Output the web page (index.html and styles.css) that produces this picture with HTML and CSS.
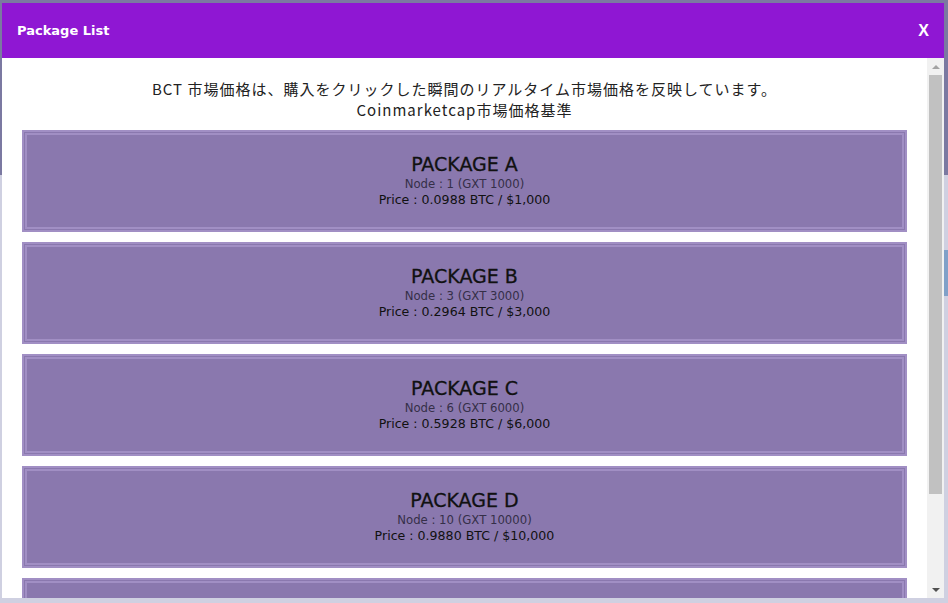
FILE: index.html
```html
<!DOCTYPE html>
<html lang="ja">
<head>
    <meta charset="UTF-8">
    <meta name="viewport" content="width=device-width, initial-scale=1.0">
    <title>Package List</title>
    <link rel="stylesheet" href="styles.css">
</head>
<body>
    <!-- Page behind the dimmed overlay -->
    <div class="page">
        <div class="page-top"></div>
        <div class="page-rest"></div>
    </div>
    <div class="side-tab"></div>

    <!-- Package popup -->
    <div class="popup" id="packagePopup">
        <div class="popup-header">
            <h2>Package List</h2>
            <button type="button" class="close-btn">X</button>
        </div>
        <div class="popup-main">
            <div class="popup-body">
                <p class="notice">BCT 市場価格は、購入をクリックした瞬間のリアルタイム市場価格を反映しています。<br>Coinmarketcap市場価格基準</p>

                <div class="package">
                    <h3>PACKAGE A</h3>
                    <div class="node">Node : 1 (GXT 1000)</div>
                    <div class="price">Price : 0.0988 BTC / $1,000</div>
                </div>
                <div class="package">
                    <h3>PACKAGE B</h3>
                    <div class="node">Node : 3 (GXT 3000)</div>
                    <div class="price">Price : 0.2964 BTC / $3,000</div>
                </div>
                <div class="package">
                    <h3>PACKAGE C</h3>
                    <div class="node">Node : 6 (GXT 6000)</div>
                    <div class="price">Price : 0.5928 BTC / $6,000</div>
                </div>
                <div class="package">
                    <h3>PACKAGE D</h3>
                    <div class="node">Node : 10 (GXT 10000)</div>
                    <div class="price">Price : 0.9880 BTC / $10,000</div>
                </div>
                <div class="package">
                    <h3>PACKAGE E</h3>
                    <div class="node">Node : 20 (GXT 20000)</div>
                    <div class="price">Price : 1.9760 BTC / $20,000</div>
                </div>
            </div>

            <!-- Scrollbar -->
            <div class="scrollbar">
                <div class="scroll-btn"><span class="arrow-up"></span></div>
                <div class="scroll-track">
                    <div class="scroll-thumb"></div>
                </div>
                <div class="scroll-btn"><span class="arrow-down"></span></div>
            </div>
        </div>
    </div>
</body>
</html>
```

FILE: styles.css
```css
/* Page and overlay */
body {
    margin: 0;
    font-family: "DejaVu Sans", "Noto Sans CJK JP", sans-serif;
    overflow: hidden;
}

.page {
    height: 603px;
    display: flex;
    flex-direction: column;
}

.page-top {
    height: 175px;
    background-color: #7b79a1;
}

.page-rest {
    flex: 1;
    background-color: #cfd0e1;
}

.side-tab {
    position: fixed;
    right: 0;
    top: 250px;
    width: 4px;
    height: 46px;
    background-color: #80a0c8;
}

/* Popup */
.popup {
    position: fixed;
    left: 2px;
    top: 3px;
    width: 942px;
    height: 595px;
    background-color: #fff;
    display: flex;
    flex-direction: column;
}

.popup-header {
    height: 55px;
    flex-shrink: 0;
    background-color: #8f17d3;
    display: flex;
    align-items: center;
    justify-content: space-between;
    padding: 0 15px 0 15px;
}

.popup-header h2 {
    margin: 0;
    color: #fff;
    font-size: 13px;
    font-weight: bold;
}

.close-btn {
    background: none;
    border: none;
    color: #fff;
    font-family: "Liberation Sans", sans-serif;
    font-size: 16px;
    font-weight: bold;
    padding: 0;
    cursor: pointer;
}

.popup-main {
    flex: 1;
    min-height: 0;
    display: flex;
}

.popup-body {
    flex: 1;
    overflow: hidden;
    padding: 20px 20px 20px 20px;
}

.notice {
    margin: 0 0 10px;
    text-align: center;
    font-family: "Noto Sans CJK JP", sans-serif;
    font-size: 15px;
    letter-spacing: 1px;
    line-height: 21px;
    color: #222;
}

/* Package cards */
.package {
    height: 102px;
    box-sizing: border-box;
    margin-bottom: 10px;
    background-color: #8a78ae;
    border: 5px double #a18fc4;
    display: flex;
    flex-direction: column;
    align-items: center;
    justify-content: center;
    text-align: center;
    color: #111;
}

.package h3 {
    margin: 0 0 2px;
    font-size: 19px;
    font-weight: 500;
    line-height: 20px;
    -webkit-text-stroke: 0.3px #111;
}

.package .node {
    font-size: 11.7px;
    line-height: 16px;
    color: #352f48;
}

.package .price {
    font-size: 12.6px;
    line-height: 16px;
}

/* Scrollbar */
.scrollbar {
    width: 17px;
    flex-shrink: 0;
    background-color: #f1f1f1;
    display: flex;
    flex-direction: column;
}

.scroll-btn {
    height: 17px;
    display: flex;
    align-items: center;
    justify-content: center;
}

.arrow-up {
    width: 0;
    height: 0;
    border-left: 4px solid transparent;
    border-right: 4px solid transparent;
    border-bottom: 4px solid #a3a3a3;
}

.arrow-down {
    width: 0;
    height: 0;
    border-left: 4px solid transparent;
    border-right: 4px solid transparent;
    border-top: 4px solid #505050;
}

.scroll-track {
    flex: 1;
}

.scroll-thumb {
    height: 419px;
    margin: 0 2px;
    background-color: #c1c1c1;
}
```
